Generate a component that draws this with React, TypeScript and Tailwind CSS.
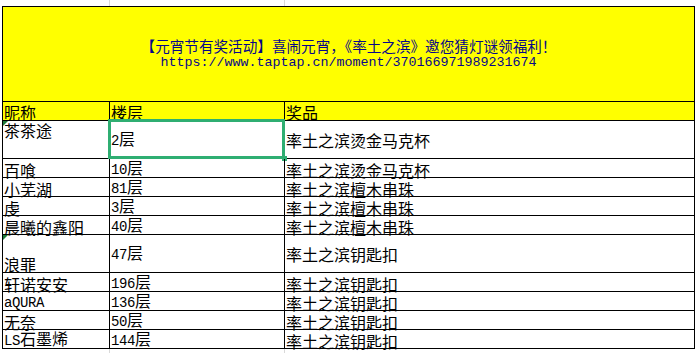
import React from "react";

type Row = {
  name: string;
  floor: string;
  prize: string;
  tall?: boolean;
  nameTop?: boolean;
  tri?: boolean;
};

const rows: Row[] = [
  { name: "茶茶途", floor: "2层", prize: "率土之滨烫金马克杯", tall: true, nameTop: true, tri: true },
  { name: "百喰", floor: "10层", prize: "率土之滨烫金马克杯" },
  { name: "小芜湖", floor: "81层", prize: "率土之滨檀木串珠" },
  { name: "虔", floor: "3层", prize: "率土之滨檀木串珠" },
  { name: "晨曦的鑫阳", floor: "40层", prize: "率土之滨檀木串珠" },
  { name: "浪罪", floor: "47层", prize: "率土之滨钥匙扣", tall: true, tri: true },
  { name: "轩诺安安", floor: "196层", prize: "率土之滨钥匙扣" },
  { name: "aQURA", floor: "136层", prize: "率土之滨钥匙扣" },
  { name: "无奈", floor: "50层", prize: "率土之滨钥匙扣" },
  { name: "LS石墨烯", floor: "144层", prize: "率土之滨钥匙扣" },
];

function Txt({ s }: { s: string }) {
  const parts = s.match(/[\x00-\x7f]+|[^\x00-\x7f]+/g) || [];
  return (
    <span className="leading-[16px] whitespace-nowrap">
      {parts.map((p, i) =>
        /^[\x00-\x7f]/.test(p) ? (
          <span key={i} className="font-['Liberation_Mono',monospace] text-[14px] tracking-[-0.4px]">
            {p}
          </span>
        ) : (
          <span key={i}>{p}</span>
        )
      )}
    </span>
  );
}

export default function App() {
  return (
    <div className="w-[696px] h-[353px] bg-white overflow-hidden font-['Noto_Sans_CJK_SC',sans-serif] text-black text-[16px] leading-[16px]">
      {/* top gridline strip */}
      <div className="flex h-[6px]">
        <div className="w-[110px] border-r border-[#d9d9d9]" />
        <div className="w-[175px] border-r border-[#d9d9d9]" />
      </div>

      <div className="ml-[2px] w-[693px] border border-black">
        {/* merged yellow title */}
        <div className="h-[95px] border-b border-black bg-[#ffff00] flex flex-col items-center justify-center pt-[1px] text-[#06068a]">
          <div className="text-[14.6px] leading-[16px] whitespace-nowrap">
            【元宵节有奖活动】喜闹元宵，《率土之滨》邀您猜灯谜领福利！
          </div>
          <div className="mt-[1px] font-['Liberation_Mono',monospace] text-[13.33px] leading-[16px] whitespace-nowrap">
            https://www.taptap.cn/moment/370166971989231674
          </div>
        </div>

        {/* header row */}
        <div className="grid grid-cols-[107px_175px_409px] h-[19px] border-b border-black bg-[#ffff00]">
          <div className="border-r border-black flex items-end pl-[1px]">昵称</div>
          <div className="border-r border-black flex items-end pl-[1px]">楼层</div>
          <div className="flex items-end pl-[1px]">奖品</div>
        </div>

        {rows.map((r, i) => {
          const last = i === rows.length - 1;
          const h = r.tall ? "h-[38px]" : last ? "h-[18px]" : "h-[19px]";
          const first = i === 0;
          return (
            <div
              key={i}
              className={`grid grid-cols-[107px_175px_409px] ${h} ${last ? "" : "border-b border-black"}`}
            >
              <div
                className={`relative border-r border-black flex pl-[1px] ${
                  r.nameTop ? "items-start pt-[1px]" : "items-end"
                }`}
              >
                {r.tri && (
                  <div className="absolute left-0 top-0 w-0 h-0 border-t-[5px] border-r-[5px] border-t-[#1f7a3a] border-r-transparent" />
                )}
                <Txt s={r.name} />
              </div>
              <div
                className={`relative border-r border-black flex pl-[1px] ${
                  r.tall ? "items-center" : "items-end"
                }`}
              >
                <Txt s={r.floor} />
                {first && (
                  <>
                    <div className="absolute left-[-2px] top-[-2px] right-[-1px] bottom-[-1px] border-[3px] border-[#2fae72]" />
                    <div className="absolute right-[-3px] bottom-[-3px] w-[5px] h-[5px] bg-[#2fae72]" />
                  </>
                )}
              </div>
              <div className={`flex pl-[1px] ${r.tall ? "items-center" : "items-end"}`}>
                <Txt s={r.prize} />
              </div>
            </div>
          );
        })}
      </div>

      {/* bottom gridline strip */}
      <div className="flex h-[5px]">
        <div className="w-[110px] border-r border-[#d9d9d9]" />
        <div className="w-[175px] border-r border-[#d9d9d9]" />
      </div>
    </div>
  );
}
